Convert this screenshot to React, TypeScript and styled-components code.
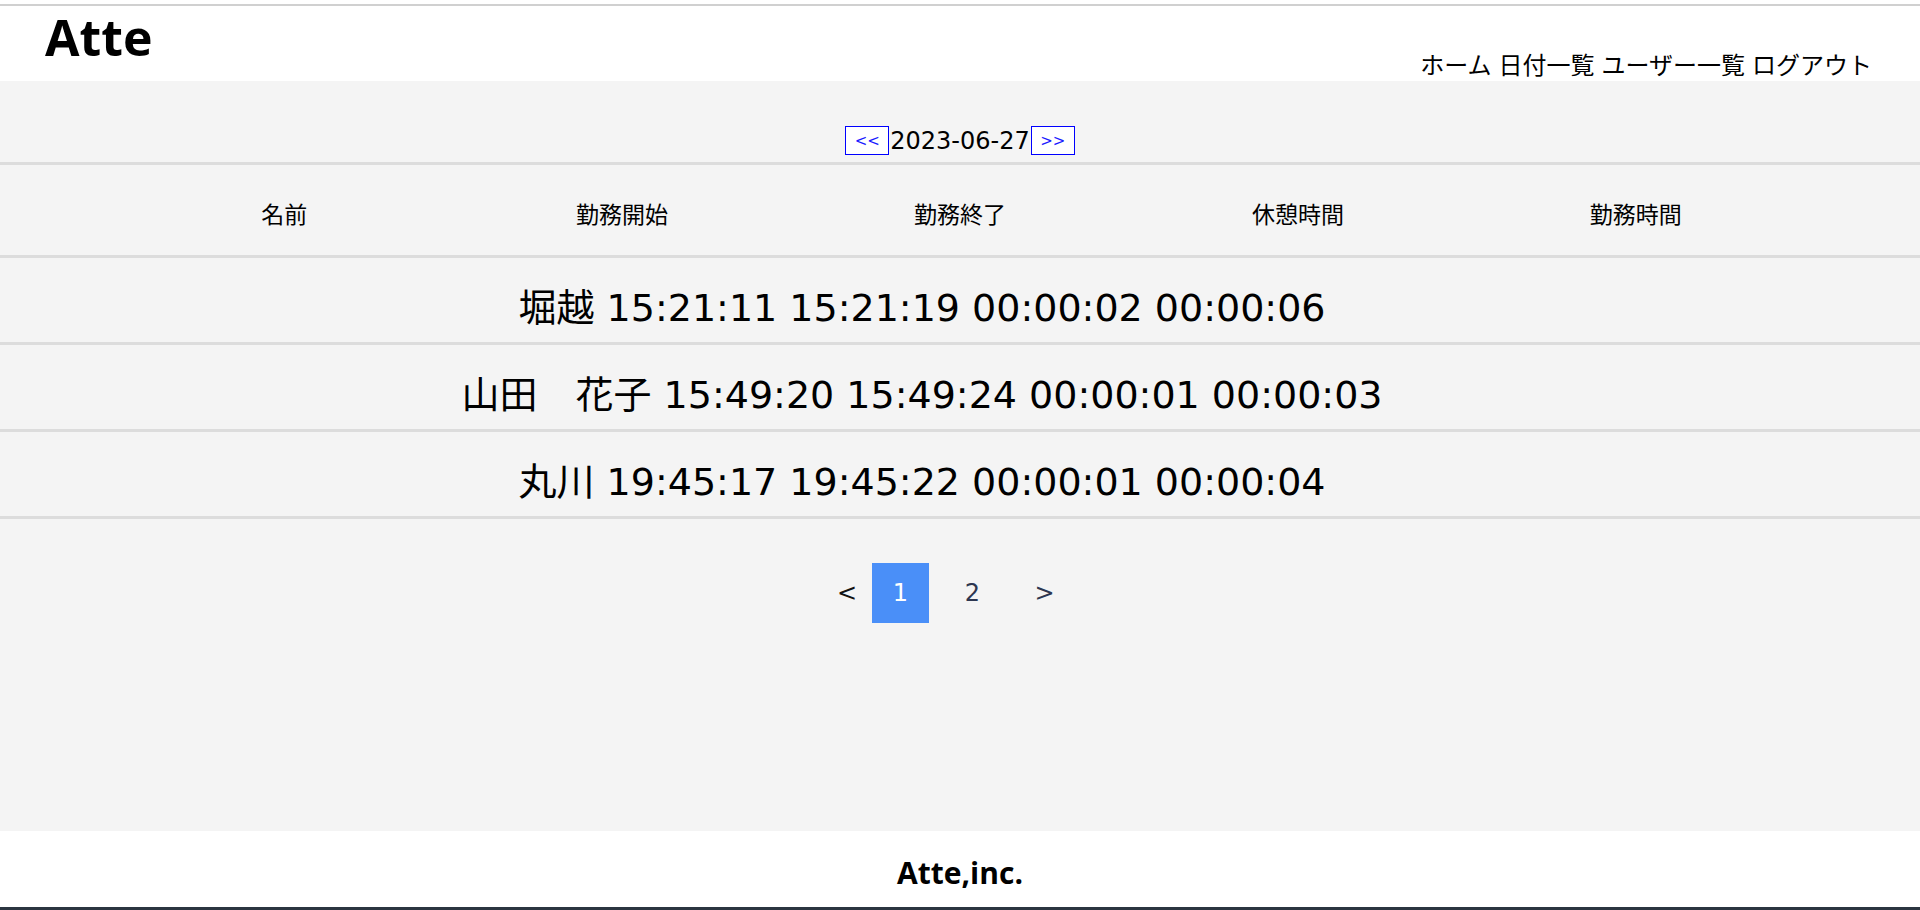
import React from "react";
import styled, { createGlobalStyle } from "styled-components";

const GlobalStyle = createGlobalStyle`
  html, body { margin: 0; padding: 0; }
  body {
    font-family: "DejaVu Sans", "Noto Sans CJK JP", sans-serif;
    color: #000;
    background: #fff;
  }
  * { box-sizing: border-box; }
`;

const Page = styled.div`
  min-height: 100vh;
  display: flex;
  flex-direction: column;
  padding-top: 4px;
`;

const Header = styled.header`
  height: 77px;
  border-top: 2px solid #d0d0d0;
  background: #fff;
  display: flex;
  justify-content: space-between;
  align-items: flex-start;
  padding: 6px 48px 0 45px;
`;

const Logo = styled.h1`
  margin: 0;
  font-family: "Open Sans", sans-serif;
  font-weight: 700;
  font-size: 50px;
  line-height: 50px;
`;

const Nav = styled.nav`
  align-self: flex-end;
  margin-bottom: 3px;
  display: flex;
  gap: 7px;
  font-size: 24px;
  line-height: 24px;
`;

const NavLink = styled.a`
  color: #000;
  text-decoration: none;
`;

const Main = styled.main`
  flex: 1;
  background: #f4f4f4;
`;

const DateNav = styled.div`
  display: flex;
  justify-content: center;
  align-items: center;
  padding-top: 45px;
  margin-bottom: 7px;
  height: 74px;
`;

const DateButton = styled.button`
  width: 44px;
  height: 29px;
  background: #fff;
  border: 1px solid #0000ff;
  color: #1a1aff;
  font-family: "DejaVu Sans", sans-serif;
  font-size: 15px;
  padding: 0;
  cursor: pointer;
`;

const DateText = styled.span`
  font-size: 24px;
  padding: 0 1px;
`;

const HeadRow = styled.div`
  border-top: 3px solid #dcdcdc;
  border-bottom: 3px solid #dcdcdc;
  height: 96px;
  padding-top: 6px;
  display: flex;
  justify-content: center;
`;

const HeadGrid = styled.div`
  width: 88%;
  display: grid;
  grid-template-columns: repeat(5, 1fr);
  align-items: center;
`;

const HeadCell = styled.div`
  text-align: center;
  font-size: 23px;
`;

const DataRow = styled.div`
  height: 87px;
  border-bottom: 3px solid #dcdcdc;
  padding: 8px 76px 0 0;
  display: flex;
  align-items: center;
  justify-content: center;
  font-size: 38px;
  white-space: pre;
`;

const Pagination = styled.nav`
  display: flex;
  justify-content: center;
  align-items: center;
  gap: 15px;
  margin-top: 44px;
  padding-right: 10px;
`;

const PageItem = styled.span<{ $active?: boolean; $narrow?: boolean; $muted?: boolean }>`
  width: ${(p) => (p.$narrow ? "20px" : "57px")};
  height: 60px;
  display: flex;
  align-items: center;
  justify-content: center;
  font-size: 24px;
  background: ${(p) => (p.$active ? "#4a8ff8" : "transparent")};
  color: ${(p) => (p.$active ? "#fff" : p.$muted ? "#111" : "#2d3650")};
`;

const Footer = styled.footer`
  height: 79px;
  background: #fff;
  border-bottom: 3px solid #2b3540;
  padding-top: 27px;
  text-align: center;
  font-family: "Open Sans", sans-serif;
  font-weight: 700;
  font-size: 30px;
  line-height: 30px;
`;

const rows = [
  "堀越 15:21:11 15:21:19 00:00:02 00:00:06",
  "山田　花子 15:49:20 15:49:24 00:00:01 00:00:03",
  "丸川 19:45:17 19:45:22 00:00:01 00:00:04",
];

const heads = ["名前", "勤務開始", "勤務終了", "休憩時間", "勤務時間"];

export default function App() {
  return (
    <>
      <GlobalStyle />
      <Page>
        <Header>
          <Logo>Atte</Logo>
          <Nav>
            <NavLink href="#">ホーム</NavLink>
            <NavLink href="#">日付一覧</NavLink>
            <NavLink href="#">ユーザー一覧</NavLink>
            <NavLink href="#">ログアウト</NavLink>
          </Nav>
        </Header>
        <Main>
          <DateNav>
            <DateButton>&lt;&lt;</DateButton>
            <DateText>2023-06-27</DateText>
            <DateButton>&gt;&gt;</DateButton>
          </DateNav>
          <HeadRow>
            <HeadGrid>
              {heads.map((h) => (
                <HeadCell key={h}>{h}</HeadCell>
              ))}
            </HeadGrid>
          </HeadRow>
          {rows.map((r) => (
            <DataRow key={r}>{r}</DataRow>
          ))}
          <Pagination>
            <PageItem $narrow $muted>&lt;</PageItem>
            <PageItem $active>1</PageItem>
            <PageItem>2</PageItem>
            <PageItem>&gt;</PageItem>
          </Pagination>
        </Main>
        <Footer>Atte,inc.</Footer>
      </Page>
    </>
  );
}
